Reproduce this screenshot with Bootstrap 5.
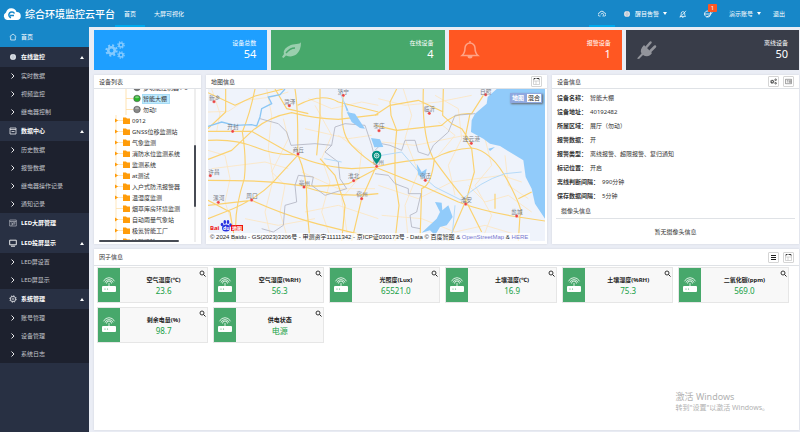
<!DOCTYPE html>
<html lang="zh-CN">
<head>
<meta charset="utf-8">
<meta name="viewport" content="width=device-width, initial-scale=1">
<title>综合环境监控云平台</title>
<link href="https://cdn.jsdelivr.net/npm/bootstrap@5.3.0/dist/css/bootstrap.min.css" rel="stylesheet">
<style>
:root{--line:#dfe2e6;--green:#47a86b}
body{font-family:"Noto Sans","Noto Sans CJK SC",sans-serif;font-size:6px;line-height:10px;color:#333;background:#eaedf5}
button{font:inherit;line-height:inherit}
a{text-decoration:none}
svg{display:block;flex:none}
.ic{width:8px;height:8px}
.topbar{height:27px;background:#1787c8;color:#fff}
.topbar a,.topbar button{color:#fff;background:none;border:0;padding:0}
.topbar .brandlink{padding-left:3px}
.brandname{font-size:10px;font-weight:500}
.topbar .toplink{height:27px;padding:2px 9px 0;border-bottom:2px solid transparent}
.topbar .toplink.on{border-bottom-color:#00a8ec}
.caret{width:0;height:0;border:2px solid transparent;border-top:3px solid #fff;border-bottom:0}
.caret.up{border-top:0;border-bottom:3px solid #fff}
.alarm{position:relative}
.alarm-count{position:absolute;left:5px;top:-6px;width:9px;height:8px;line-height:8px;background:#ff5722;border-radius:1px;text-align:center}
.user-links{padding-right:15px}
.side{width:89px;background:#283043;flex:none}
.side a,.side button{display:flex;align-items:center;width:100%;height:20px;padding:0 5px 0 9px;border:0;background:none;color:#fff;font-weight:700;text-align:left;gap:4px}
.side svg{width:8px;height:8px}
.side .home{background:#1787c8;font-weight:400}
.side .subs{background:#1d212e}
.side .subs a{height:18px;font-weight:400;color:#c3c6cc}
.workspace{min-width:0;padding:3px 1px 2px 5px;gap:5px}
.tiles{display:grid;grid-template-columns:repeat(4,1fr);gap:4px}
.tile{height:40px;padding:0 11px;color:#fff}
.tile svg{width:20px;height:20px;opacity:.45}
.tile div{padding-bottom:3px}
.tile strong{display:block;font-size:11px;line-height:11px;font-weight:400}
.t-blue{background:#1e9fff}.t-green{background:#47a86b}.t-red{background:#ff5722}.t-dark{background:#393d49}
.panels{display:grid;grid-template-columns:107fr 341fr 247fr;gap:5px;min-height:169px}
.pane{background:#fff;box-shadow:0 0 2px #cfd3db;min-width:0}
.pane-head{height:14px;padding:0 5px;border-bottom:1px solid var(--line)}
.pane-head h2{font-size:6px;line-height:10px;margin:0;font-weight:400;color:#333}
.tool{width:11px;height:11px;padding:0;border:1px solid #d5d5d5;border-radius:1px;background:#fff;display:grid;place-items:center}
.tool svg{width:7px;height:7px}
.treebox{position:relative;height:153px;overflow:hidden}
.tree{list-style:none;margin:-7px 0 0;padding:0 0 0 20px;position:relative}
.tree li{height:11px;display:flex;align-items:center;gap:2px;white-space:nowrap}
.tree li>svg{width:16px;height:11px}
.tree li.leaf{padding-left:10px;gap:0}
.tree li.leaf>svg{width:18px}
.tree .pick{background:#beebff;box-shadow:0 0 0 1px #a8dcf5 inset;padding-right:3px}
.tree span{padding-left:1px}
.thumb{position:absolute;background:#474b54;border-radius:1px}
.thumb-v{right:5px;top:56px;width:2px;height:62px}
.thumb-h{left:5px;bottom:0;width:80px;height:2px}
.track-v{position:absolute;right:5px;top:0;width:2px;height:153px;background:#eee}
.mapbox{position:relative;margin:0 2px 3px;height:152px;overflow:hidden}
.mapbox .region{width:100%;height:100%}
.credits{position:absolute;left:0;bottom:0;padding:0 2px;line-height:8px;background:#ffffffc0;white-space:nowrap;color:#222;font-family:"Liberation Sans","Noto Sans CJK SC",sans-serif}
.credits a{color:#7777d0}
.maptype{position:absolute;right:3px;top:4px;display:flex;box-shadow:1px 1px 2px #666}
.maptype button{border:1px solid #8ea8e0;background:#fff;color:#222;width:16px;height:10px;line-height:8px;padding:0;text-align:center}
.maptype button.on{background:#8ea8e0;color:#fff;font-weight:700}
.mapbox .baidu{position:absolute;left:2px;bottom:9px;width:34px;height:13px}
.facts{margin:0;padding:2px 5px 0}
.facts div{display:flex;height:14px;align-items:center;gap:3px}
.facts dt{font-weight:700}.facts dd{margin:0}
.camera{margin:3px 4px 0;padding:0 5px 2px;border-bottom:1px solid var(--line)}
.factors{min-height:181px;position:relative}
.factors>.pane-head{height:17px}
.sensors{display:grid;grid-template-columns:repeat(6,1fr);gap:4px 5px;padding:1px 10px 0 3px}
.sensor{display:flex;height:36px;border:1px solid #e6e6e6;background:#f8f8f8;position:relative}
.sensor-icon{width:22px;background:var(--green);display:grid;place-items:center}
.sensor-icon svg{width:14px;height:16px}
.sensor h3{font-size:6px;line-height:9px;margin:0;font-weight:700;color:#222}
.sensor p{font-size:8px;line-height:12px;margin:0;color:#16a045}
.sensor button{position:absolute;right:1px;top:2px;padding:0;border:0;background:none}
.sensor button svg{width:7px;height:7px}
.activate{position:absolute;right:30px;bottom:17px;color:#b1b1b1;font-size:7px;line-height:10px;white-space:nowrap}
.activate b{display:block;font-weight:400;font-size:9px;line-height:12px}
</style>
<script defer src="https://cdn.jsdelivr.net/npm/bootstrap@5.3.0/dist/js/bootstrap.bundle.min.js"></script>
</head>
<body class="d-flex flex-column min-vh-100">
<svg class="d-none" aria-hidden="true">
  <symbol id="chev" viewBox="0 0 8 8"><path d="M2.5 1.5 5 4 2.5 6.5" fill="none" stroke="#e8e8ea"/></symbol>
  <symbol id="globe" viewBox="0 0 8 8"><circle cx="4" cy="4" r="3" fill="#e4e6ea"/><path d="M1 4H7M4 1V7M4 1Q1.5 4 4 7Q6.500 4 4 1" fill="none" stroke="#a8b4c2" stroke-width=".4"/></symbol>
  <symbol id="gear" viewBox="0 0 20 20"><circle cx="10" cy="10" r="5" fill="none" stroke="currentColor" stroke-width="4"/><circle cx="10" cy="10" r="8" fill="none" stroke="currentColor" stroke-width="3" stroke-dasharray="3.14 3.14"/></symbol>
  <symbol id="gears" viewBox="0 0 20 20"><use href="#gear" x="0" y="4" width="13" height="13"/><use href="#gear" x="12" y="1" width="8" height="8"/><use href="#gear" x="12" y="11" width="8" height="8"/></symbol>
  <symbol id="seek" viewBox="0 0 7 7"><circle cx="3" cy="3" r="2" fill="none" stroke="#222" stroke-width=".9"/><path d="M4.500 4.500 6.500 6.500" stroke="#222"/></symbol>
  <symbol id="router" viewBox="0 0 14 16"><rect y="9" width="14" height="6" rx="1" fill="#fff"/><circle cx="3" cy="12" r=".6" fill="#47a86b"/><circle cx="5.500" cy="12" r=".6" fill="#47a86b"/><path d="M7 6V9M4.500 6.500A2.500 2.500 0 0 1 9.500 6.500M3 5.500A4.200 4.200 0 0 1 11 5.500M1.500 4.300A6 6 0 0 1 12.500 4.300" fill="none" stroke="#fff" stroke-width=".8"/></symbol>
  <symbol id="folder" viewBox="0 0 16 11"><path d="M2 0V11M2 5.500H9" stroke="#ffdca0" stroke-width=".7"/><path d="M1 3.500 4 5.500 1 7.500ZM9 2.500H12L13 3.500H16V9H9Z" fill="#ff9c0a"/></symbol>
  <symbol id="folder-plain" viewBox="0 0 16 11"><path d="M2 0V11M2 5.500H9" stroke="#ffdca0" stroke-width=".7"/><path d="M9 2.500H12L13 3.500H16V9H9Z" fill="#ff9c0a"/></symbol>
  <symbol id="ball" viewBox="0 0 18 11"><path d="M2 0V11M2 5.500H9" stroke="#ffdca0" stroke-width=".8" fill="none"/><circle cx="13" cy="5.500" r="3.300" fill="currentColor" stroke="#555" stroke-width=".6"/><ellipse cx="13" cy="4.300" rx="2" ry="1" fill="#fff" opacity=".4"/></symbol>
  <symbol id="window" viewBox="0 0 7 7"><path d="M.5 1V6.500H6.500V1M.5 3H6.500M3 3V6.500" fill="none" stroke="#bbb" stroke-width=".6"/><path d="M1 1.500V.5H2.500M3.500 .5H6V1.500" stroke="#222" fill="none" stroke-width=".9"/></symbol>
</svg>

<header class="topbar d-flex align-items-center">
  <a href="#" class="brandlink d-flex align-items-center">
    <svg width="18" height="12" viewBox="0 0 18 12"><path d="M4 12A4 4 0 0 1 3 4.500A5.500 5.500 0 0 1 13.500 4A4 4 0 0 1 14 12Z" fill="#fff"/><path d="M11.500 5.500A3 3 0 1 0 8 9.800M7 7.500H11" fill="none" stroke="#1787c8" stroke-width="1.500"/></svg>
    <span class="brandname ms-1">综合环境监控云平台</span>
  </a>
  <nav class="d-flex">
    <a href="#" class="toplink on d-flex align-items-center">首页</a>
    <a href="#" class="toplink d-flex align-items-center">大屏可视化</a>
  </nav>
  <div class="user-links d-flex align-items-center ms-auto">
    <button class="toplink on d-flex align-items-center" aria-label="云"><svg class="ic" viewBox="0 0 8 8"><path d="M2.500 6H1.500A1.500 1.500 0 0 1 1.500 3A2.500 2.500 0 0 1 6.300 3A1.500 1.500 0 0 1 6.500 6L5.500 6.300M3 4.500A1.300 1.300 0 1 1 4.500 6" fill="none" stroke="#fff" stroke-width=".8"/></svg></button>
    <button class="d-flex align-items-center gap-1 ms-2"><svg class="ic"><use href="#globe"/></svg><span>醒目告警</span><i class="caret"></i></button>
    <button class="ms-2" aria-label="静音"><svg class="ic ms-1" viewBox="0 0 8 8"><path d="M1 6.500H6.500L5.700 5V3A1.800 1.800 0 0 0 2.200 3V5ZM3 7.300H4.500M7 .8 1 7.500" fill="none" stroke="#fff" stroke-width=".7"/></svg></button>
    <button class="alarm ms-3" aria-label="告警"><svg width="10" height="8" viewBox="0 0 10 8"><path d="M7.500 5.500A3.200 3 0 1 1 7.500 2.500L7.500 4H1.300M6 1Q9.500 -.5 9 2.500Q8 5.500 3.500 7" fill="none" stroke="#fff" stroke-width=".8"/></svg><span class="alarm-count">1</span></button>
    <button class="d-flex align-items-center gap-1 ms-3">演示账号<i class="caret"></i></button>
    <a href="#" class="ms-2 ps-1">退出</a>
  </div>
</header>

<div class="d-flex flex-grow-1">
  <nav class="side">
    <a class="home" href="#"><svg viewBox="0 0 8 8"><path d="M.7 3.700 4 1 7.300 3.700M1.700 3.500V7H6.300V3.500" fill="none" stroke="#fff" stroke-width=".7"/></svg>首页</a>
    <button><svg><use href="#globe"/></svg>在线监控<i class="caret up ms-auto"></i></button>
    <div class="subs"><a href="#"><svg><use href="#chev"/></svg>实时数据</a><a href="#"><svg><use href="#chev"/></svg>视频监控</a><a href="#"><svg><use href="#chev"/></svg>继电器控制</a></div>
    <button><svg viewBox="0 0 8 8"><path d="M1 1H7V7H1ZM1 2.500H7M2.500 4.500H5.500" fill="none" stroke="#e4e6ea" stroke-width=".8"/></svg>数据中心<i class="caret up ms-auto"></i></button>
    <div class="subs"><a href="#"><svg><use href="#chev"/></svg>历史数据</a><a href="#"><svg><use href="#chev"/></svg>报警数据</a><a href="#"><svg><use href="#chev"/></svg>继电器操作记录</a><a href="#"><svg><use href="#chev"/></svg>通知记录</a></div>
    <a href="#"><svg viewBox="0 0 8 8"><path d="M.7 1H7.300V7H.7ZM.7 2.500H7.300M2 4H3.500V6H2M5 3V6M4.500 4H6.500" fill="none" stroke="#c8cbd2" stroke-width=".6"/></svg>LED大屏管理</a>
    <button><svg viewBox="0 0 8 8"><path d="M.7 1.200H7.300V5.800H.7ZM2 7.200H6" fill="none" stroke="#fff" stroke-width=".9"/></svg>LED投屏显示<i class="caret up ms-auto"></i></button>
    <div class="subs"><a href="#"><svg><use href="#chev"/></svg>LED屏设置</a><a href="#"><svg><use href="#chev"/></svg>LED屏显示</a></div>
    <button><svg viewBox="0 0 8 8"><circle cx="4" cy="4" r="2.700" fill="none" stroke="#dfe1e5" stroke-width=".8"/><circle cx="4" cy="4" r="3.200" fill="none" stroke="#dfe1e5" stroke-dasharray="1.200 1.300"/><circle cx="4" cy="4" r="1" fill="none" stroke="#dfe1e5" stroke-width=".6"/></svg>系统管理<i class="caret up ms-auto"></i></button>
    <div class="subs"><a href="#"><svg><use href="#chev"/></svg>账号管理</a><a href="#"><svg><use href="#chev"/></svg>设备管理</a><a href="#"><svg><use href="#chev"/></svg>系统日志</a></div>
  </nav>

  <main class="workspace flex-grow-1 d-flex flex-column">
    <section class="tiles">
      <div class="tile t-blue d-flex align-items-center justify-content-between"><svg><use href="#gears"/></svg><div class="text-end">设备总数<strong>54</strong></div></div>
      <div class="tile t-green d-flex align-items-center justify-content-between"><svg viewBox="0 0 20 20"><path d="M19 2C18 5 12 3 7 6C3 8 1 11 2 14L0 17L1.500 18L4 15.500C10 18 16 15 18 9Q19 6 19 2Z" fill="#fff"/><path d="M4 13Q8 8 13 8" fill="none" stroke="#47a86b" stroke-width="1.300"/></svg><div class="text-end">在线设备<strong>4</strong></div></div>
      <div class="tile t-red d-flex align-items-center justify-content-between"><svg viewBox="0 0 20 20"><path d="M2 15.500Q5 13 5 8A5 5 0 0 1 15 8Q15 13 18 15.500ZM10 1V3" fill="none" stroke="#fff" stroke-width="1.500"/><path d="M7.500 16A2.500 2.500 0 0 0 12.500 16Z" fill="#fff"/></svg><div class="text-end">报警设备<strong>1</strong></div></div>
      <div class="tile t-dark d-flex align-items-center justify-content-between"><svg viewBox="0 0 20 20"><path d="M7 5 15 13C12.500 17 9 17 6 15L2 19L0 18.500L4.500 13.500C3 11 4 8 7 5Z" fill="#fff"/><path d="M9.500 7 13.500 2.500M13.500 11 18 6.500" stroke="#fff" stroke-width="2.500" stroke-linecap="round"/></svg><div class="text-end">离线设备<strong>50</strong></div></div>
    </section>

    <section class="panels">
      <div class="pane">
        <div class="pane-head d-flex align-items-center"><h2>设备列表</h2></div>
        <div class="treebox">
          <ul class="tree">
            <li class="leaf"><svg style="color:#777"><use href="#ball"/></svg><span>多功能控制器1-6</span></li>
            <li class="leaf"><svg style="color:#2ab52a"><use href="#ball"/></svg><span class="pick">智能大棚</span></li>
            <li class="leaf"><svg style="color:#888"><use href="#ball"/></svg><span>勿动!</span></li>
            <li><svg><use href="#folder"/></svg>0912</li>
            <li><svg><use href="#folder"/></svg>GNSS位移监测站</li>
            <li><svg><use href="#folder"/></svg>气象监测</li>
            <li><svg><use href="#folder"/></svg>消防水位监测系统</li>
            <li><svg><use href="#folder"/></svg>监测系统</li>
            <li><svg><use href="#folder"/></svg>at测试</li>
            <li><svg><use href="#folder"/></svg>入户式防汛报警器</li>
            <li><svg><use href="#folder"/></svg>温湿度监测</li>
            <li><svg><use href="#folder-plain"/></svg>烟草库房环境监测</li>
            <li><svg><use href="#folder"/></svg>自动雨量气象站</li>
            <li><svg><use href="#folder"/></svg>极氪智能工厂</li>
            <li><svg><use href="#folder"/></svg>冷链运输</li>
          </ul>
          <i class="track-v"></i><i class="thumb thumb-v"></i><i class="thumb thumb-h"></i>
        </div>
      </div>

      <div class="pane">
        <div class="pane-head d-flex align-items-center justify-content-between"><h2>地图信息</h2><button class="tool" aria-label="放大地图"><svg><use href="#window"/></svg></button></div>
        <div class="mapbox">
          <svg class="region" viewBox="9 51 1011 456" preserveAspectRatio="xMidYMid slice">
            <rect x="0" y="40" width="1040" height="480" fill="#eff3fb"/>
            <g fill="none" stroke="#fde6c0" stroke-width="2.500">
              <path d="M20 51 45 125 35 178M9 120 70 118 120 85 200 75 250 60M185 51 200 130 190 230 205 320 180 420 200 507M235 140 250 200 200 300 240 340 225 420 250 507M9 235 60 250 75 320 60 390 80 450M330 100 380 190 350 260 375 330 350 420 380 507M400 190 470 240 460 320 410 380 430 507M300 170 430 200 500 190M290 300 400 350 510 350M20 290 180 270 250 290M300 420 400 400 520 440M310 80 380 110 470 90 520 100M120 440 220 460 330 440"/>
              <path transform="translate(510 0)" d="M10 80 90 100 190 90 290 70M85 51 110 130 90 200 130 300 90 400 100 507M180 70 250 110 260 200 220 280 240 370M20 210 120 220 270 190M190 150 240 190 190 250M330 200 350 280 300 340 350 430 320 507M10 340 130 380 230 330 380 310 440 330M390 250 400 340 460 380M280 340 330 390 400 370 470 420M20 430 140 440 240 480 330 460 430 490"/>
            </g>
            <g fill="none" stroke="#fbd270" stroke-width="3.500" stroke-linejoin="round">
              <path d="M9 178H140Q190 135 260 122Q330 140 400 142L520 128M62 51V120L9 170M9 62 90 100 150 72 235 51M150 51Q135 125 112 180Q125 260 118 320Q92 400 92 460M9 205Q90 200 150 225T270 248M9 262 80 235 140 178 235 232Q330 285 440 290L520 285M270 51Q280 110 278 246Q310 320 305 400L315 507M278 250 200 335Q150 385 60 420L9 440M9 325Q180 325 240 335Q330 350 430 335L515 290M9 400 140 385Q230 425 300 445T520 500M345 51V140L335 250M278 100Q350 60 400 90L520 120M415 70Q400 180 440 220T515 280L470 380 440 507M300 345Q400 380 520 365M9 385 75 420 90 507M345 260 390 310 420 400 410 507M210 51 245 110 310 125"/>
              <path transform="translate(510 0)" d="M65 51 45 90 48 130 65 175 60 230M0 160 65 175 200 160Q240 120 290 125L325 70M145 51Q140 190 175 260Q225 330 272 385L320 480M205 51 203 130 230 155 260 170 290 215M10 283Q90 265 175 260 230 230 290 228 350 235 400 330T435 430L430 507M0 285 150 345 250 390Q330 420 430 435L510 447M178 260Q170 340 140 350L135 507M285 125 270 200 290 230 298 300 275 380 220 507M60 230V320L72 400 60 507M0 130 45 100 130 85 205 120M430 380 470 360M360 365V410"/>
            </g>
            <g fill="none" stroke="#b2b5c2" stroke-width="2.500">
              <path d="M165 140 220 155 245 180 258 220 330 215 380 220 390 165 420 155 480 160 500 220 515 280M380 220 360 240 400 270 405 320 425 350 360 370 320 340 325 315 280 310 270 340 275 390 240 400 235 460 205 480 170 470"/>
              <path transform="translate(510 0)" d="M0 235 20 215 45 220 80 235 90 205 120 205 130 240 160 250 175 220 220 180 240 130 300 125M0 305 40 310 60 335 100 350 100 365 138 365 125 420 105 430 110 465 135 470"/>
            </g>
            <path d="M9 163 50 150 90 160 140 158 155 162 165 135 170 110 200 95 190 75 225 68 240 51" fill="none" stroke="#8ac6f5" stroke-width="4"/>
            <path d="M400 51 430 120 450 150M358 260 410 270 M530 250 590 240 650 310 690 345 770 385Q820 330 900 305L950 300M750 400 740 507" fill="none" stroke="#b5daf8" stroke-width="3"/>
            <g fill="#91cbfa"><path d="M425 120 450 125 480 170 465 168 440 150ZM498 198 525 202 535 225 508 226ZM415 85 430 115 425 118Z"/><path d="M875 51 848 75 845 95 810 125 800 145 798 180 835 200 855 215 885 222 955 265 962 315 980 350 990 395 1020 440H1040V40Z"/><path d="M850 230 870 225 855 237ZM635 275 650 300 665 290 660 318 640 310ZM690 390 710 392 712 415 730 400 743 435 725 460 705 465 690 490 675 475 650 482 695 440 705 420Z"/></g>
            <g fill="#ec4444" stroke="#fff" stroke-width="1"><circle cx="27" cy="89" r="5"/><circle cx="253" cy="101" r="5"/><circle cx="415" cy="70" r="5"/><circle cx="83" cy="178" r="5"/><circle cx="279" cy="246" r="5"/><circle cx="16" cy="311" r="5"/><circle cx="297" cy="345" r="5"/><circle cx="446" cy="326" r="5"/><circle cx="140" cy="384" r="5"/><circle cx="40" cy="391" r="5"/><circle cx="470" cy="380" r="5"/><circle cx="515" cy="283" r="5"/><circle cx="522" cy="176" r="5"/><circle cx="673" cy="124" r="5"/><circle cx="799" cy="214" r="5"/><circle cx="842" cy="68" r="5"/><circle cx="661" cy="325" r="5"/><circle cx="782" cy="396" r="5"/><circle cx="935" cy="432" r="5"/></g>
            <g font-size="17" fill="#777b83" text-anchor="middle"><text x="29" y="83">新乡</text><text x="254" y="95">菏泽</text><text x="415" y="66">济宁</text><text x="84" y="171">开封</text><text x="280" y="239">商丘</text><text x="27" y="305">许昌</text><text x="298" y="338">亳州</text><text x="446" y="319">淮北</text><text x="141" y="377">周口</text><text x="41" y="384">漯河</text><text x="471" y="373">宿州</text><text x="520" y="276">徐州</text><text x="522" y="169">枣庄</text><text x="673" y="117">临沂</text><text x="799" y="207">连云港</text><text x="842" y="66">日照</text><text x="661" y="318">宿迁</text><text x="784" y="389">淮安</text><text x="936" y="425">盐城</text></g>
            <path d="M515 276Q501 261 501 250A14 14 0 0 1 529 250Q529 261 515 276Z" fill="#008f80"/><circle cx="515" cy="251" r="7" fill="none" stroke="#fff" stroke-width="2.500"/><path d="M515 246V256M510 251H520" stroke="#fff" stroke-width="1.500"/>
          </svg>
          <svg class="baidu" viewBox="0 0 34 13" font-weight="700"><text x="0" y="11" font-size="6" fill="#e11">Bai</text><g fill="#2932e1"><ellipse cx="16" cy="9" rx="4" ry="3.500"/><ellipse cx="12" cy="5.500" rx="1.300" ry="1.800"/><ellipse cx="14.800" cy="3" rx="1.300" ry="2"/><ellipse cx="18" cy="3" rx="1.300" ry="2"/><ellipse cx="20.500" cy="6" rx="1.300" ry="1.800"/></g><text x="13" y="11" font-size="5" fill="#fff">du</text><rect x="21" y="6" width="12" height="6" fill="#e11"/><text x="22" y="11" font-size="5" fill="#fff">地图</text></svg>
          <div class="maptype"><button class="on">地图</button><button>混合</button></div>
          <div class="credits">© 2024 Baidu - GS(2023)3206号 - 甲测资字11111342 - 京ICP证030173号 - Data © 百度智图 &amp; <a href="#">OpenStreetMap</a> &amp; <a href="#">HERE</a></div>
        </div>
      </div>

      <div class="pane">
        <div class="pane-head d-flex align-items-center"><h2 class="me-auto">设备信息</h2><button class="tool me-1" aria-label="设置"><svg style="color:#222"><use href="#gears"/></svg></button><button class="tool" aria-label="详情"><svg viewBox="0 0 8 8"><path d="M.5 1.500H7.500V6.500H.5ZM2 3H4M2 4.500H4M5 3H6.500V5H5Z" fill="none" stroke="#666" stroke-width=".7"/></svg></button></div>
        <dl class="facts">
          <div><dt>设备名称：</dt><dd>智能大棚</dd></div>
          <div><dt>设备地址：</dt><dd>40192482</dd></div>
          <div><dt>所属区域：</dt><dd>展厅（勿动）</dd></div>
          <div><dt>报警数据：</dt><dd>开</dd></div>
          <div><dt>报警类型：</dt><dd>离线报警、超限报警、复归通知</dd></div>
          <div><dt>标记位置：</dt><dd>开启</dd></div>
          <div><dt>离线判断间隔：</dt><dd>990分钟</dd></div>
          <div><dt>保存数据间隔：</dt><dd>5分钟</dd></div>
        </dl>
        <div class="camera">摄像头信息</div>
        <div class="text-center pt-2">暂无摄像头信息</div>
      </div>
    </section>

    <section class="pane factors flex-grow-1">
      <div class="pane-head d-flex align-items-center"><h2 class="me-auto">因子信息</h2><button class="tool" aria-label="列表"><svg viewBox="0 0 7 7"><path d="M1 1.500H6M1 3.500H6M1 5.500H6" stroke="#222"/></svg></button><button class="tool ms-1" aria-label="放大"><svg><use href="#window"/></svg></button></div>
      <div class="sensors">
        <article class="sensor"><div class="sensor-icon"><svg><use href="#router"/></svg></div><div class="flex-grow-1 text-center pt-2"><h3>空气温度(℃)</h3><p>23.6</p></div><button aria-label="查看"><svg><use href="#seek"/></svg></button></article>
        <article class="sensor"><div class="sensor-icon"><svg><use href="#router"/></svg></div><div class="flex-grow-1 text-center pt-2"><h3>空气湿度(%RH)</h3><p>56.3</p></div><button aria-label="查看"><svg><use href="#seek"/></svg></button></article>
        <article class="sensor"><div class="sensor-icon"><svg><use href="#router"/></svg></div><div class="flex-grow-1 text-center pt-2"><h3>光照度(Lux)</h3><p>65521.0</p></div><button aria-label="查看"><svg><use href="#seek"/></svg></button></article>
        <article class="sensor"><div class="sensor-icon"><svg><use href="#router"/></svg></div><div class="flex-grow-1 text-center pt-2"><h3>土壤温度(℃)</h3><p>16.9</p></div><button aria-label="查看"><svg><use href="#seek"/></svg></button></article>
        <article class="sensor"><div class="sensor-icon"><svg><use href="#router"/></svg></div><div class="flex-grow-1 text-center pt-2"><h3>土壤湿度(%RH)</h3><p>75.3</p></div><button aria-label="查看"><svg><use href="#seek"/></svg></button></article>
        <article class="sensor"><div class="sensor-icon"><svg><use href="#router"/></svg></div><div class="flex-grow-1 text-center pt-2"><h3>二氧化碳(ppm)</h3><p>569.0</p></div><button aria-label="查看"><svg><use href="#seek"/></svg></button></article>
        <article class="sensor"><div class="sensor-icon"><svg><use href="#router"/></svg></div><div class="flex-grow-1 text-center pt-2"><h3>剩余电量(%)</h3><p>98.7</p></div><button aria-label="查看"><svg><use href="#seek"/></svg></button></article>
        <article class="sensor"><div class="sensor-icon"><svg><use href="#router"/></svg></div><div class="flex-grow-1 text-center pt-2"><h3>供电状态</h3><p>电源</p></div><button aria-label="查看"><svg><use href="#seek"/></svg></button></article>
      </div>
      <div class="activate"><b>激活 Windows</b>转到"设置"以激活 Windows。</div>
    </section>
  </main>
</div>
</body>
</html>
